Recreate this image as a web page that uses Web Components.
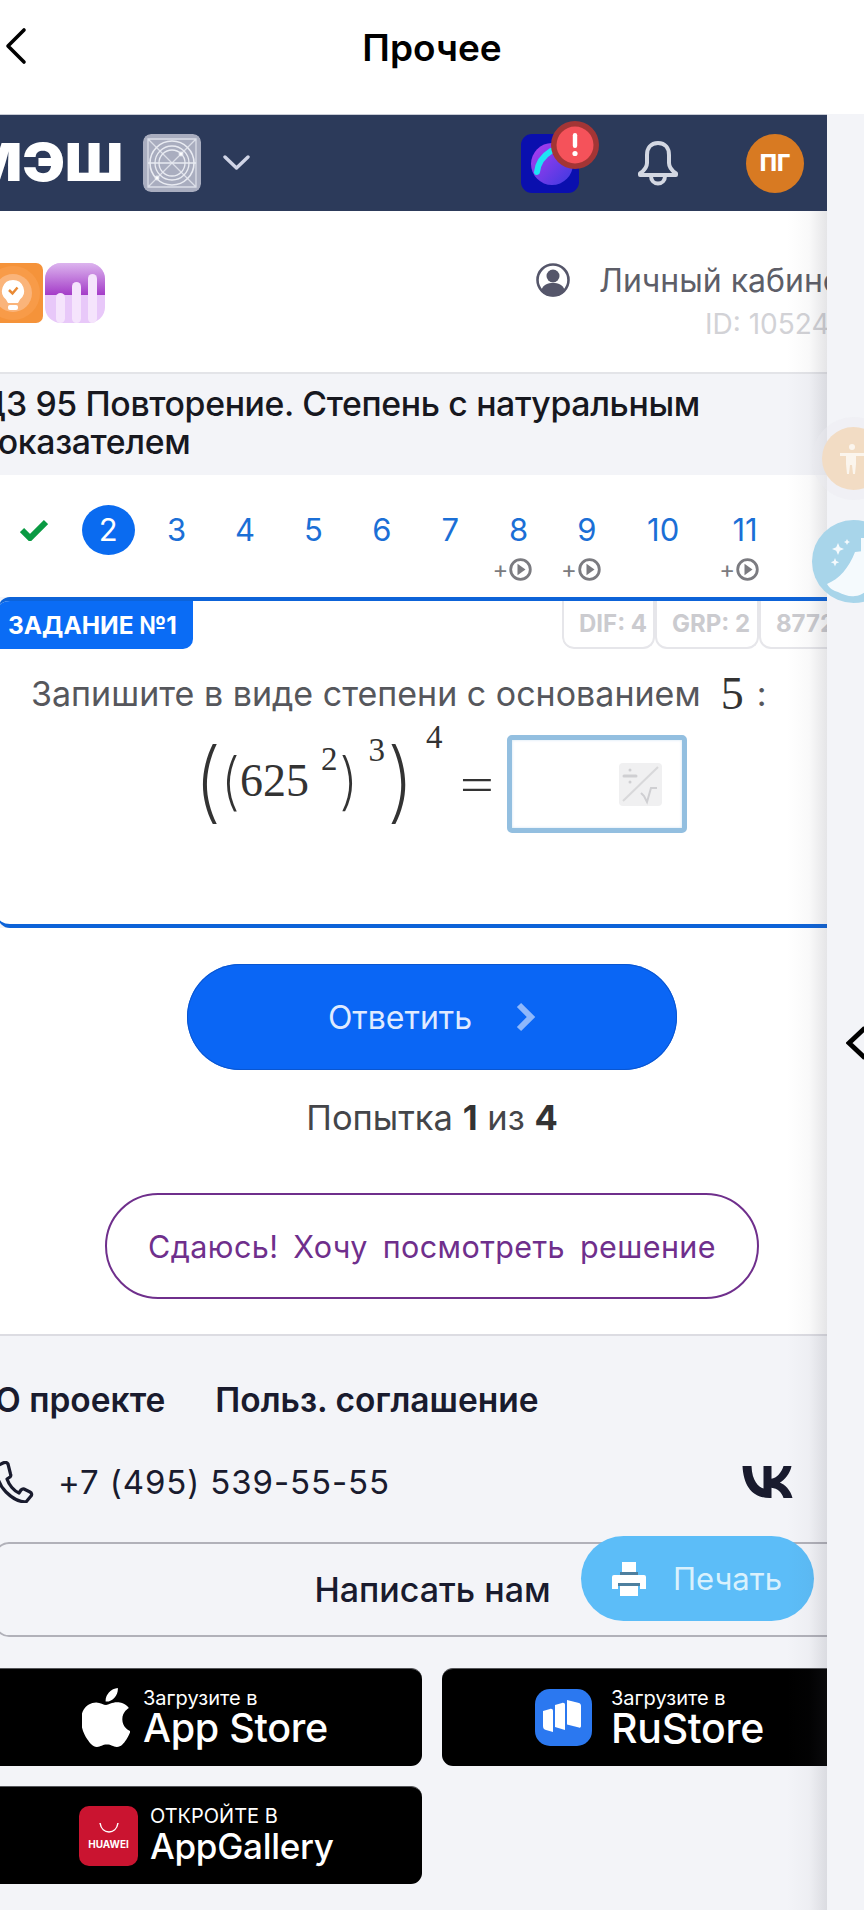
<!doctype html>
<html lang="ru">
<head>
<meta charset="utf-8">
<title>Прочее</title>
<style>
  html, body { margin: 0; background: #fff; }
  body { font-family: Inter, "Liberation Sans", sans-serif; }
</style>
</head>
<body>
<app-bar>Прочее</app-bar>
<app-frame>
  <mesh-header></mesh-header>
  <sub-header></sub-header>
  <lesson-title>ДЗ 95 Повторение. Степень с натуральным показателем</lesson-title>
  <task-nav></task-nav>
  <task-card></task-card>
  <task-actions></task-actions>
  <site-footer></site-footer>
</app-frame>

<script>
class Base extends HTMLElement {
  constructor() {
    super()
    this.attachShadow({ mode: 'open' })
  }

  connectedCallback() {
    this.shadowRoot.innerHTML = this.render()
  }
}

class AppBar extends Base {
  render() {
    return `
      <style>
        :host { display: flex; height: 114px; align-items: center; justify-content: center; position: relative; background: #fff; }
        .title { font-size: 37px; font-weight: 600; color: #000; margin-top: -19px; }
        svg { position: absolute; left: 4px; top: 27px; }
      </style>
      <svg width="24" height="38" viewBox="0 0 24 38" fill="none" stroke="#000" stroke-width="3.6" stroke-linecap="round" stroke-linejoin="round"><path d="M20 3 4 19l16 16"/></svg>
      <span class="title"><slot></slot></span>
    `
  }
}

class AppFrame extends Base {
  render() {
    return `
      <style>
        :host { display: flex; height: 1796px; background: #f3f4f8; position: relative; overflow: hidden; }
        .main { width: 827px; flex: none; position: relative; overflow: hidden; }
        .fade { position: absolute; right: 0; top: 97px; bottom: 0; width: 40px; pointer-events: none;
          background: linear-gradient(to right, rgba(70,70,85,0), rgba(70,70,85,.03) 55%, rgba(70,70,85,.14)); }
        .rail { flex: 1; display: flex; align-items: center; }
        .rail svg { margin-top: 62px; margin-left: 19px; }
        .bubble { position: absolute; border-radius: 50%; overflow: hidden; }
        .a11y { left: 822px; top: 313px; width: 63px; height: 63px; background: #f2dcc4; box-shadow: 0 0 0 10px rgba(235,235,240,.4); }
        .broom { left: 812px; top: 406px; width: 83px; height: 83px; background: #a8d5ea; }
      </style>
      <div class="main"><slot></slot><div class="fade"></div></div>
      <div class="rail">
        <svg width="18" height="36" viewBox="0 0 18 36" fill="none" stroke="#000" stroke-width="5" stroke-linejoin="miter"><path d="M19 3 3 18l16 15"/></svg>
      </div>
      <div class="bubble a11y">
        <svg width="63" height="63" viewBox="0 0 63 63" fill="#fff" opacity=".7"><circle cx="30" cy="20" r="3"/><path d="M18 26h24v3h-8v8l-1 10h-2l-1-9h-2l-1 9h-2l-1-10v-8h-6z"/></svg>
      </div>
      <div class="bubble broom">
        <svg width="83" height="83" viewBox="0 0 83 83" fill="#fff" opacity=".88">
          <path d="M43 32C37 48 27 59 15 64c3 5 7 7 11 8 6 3 12 5 17 4 4 0 7-2 10-4V31z"/>
          <path d="M49 18h5v14h-5z"/>
          <path d="M26 23l1.800 4.200 4.200 1.800-4.200 1.800-1.800 4.200-1.800-4.200-4.200-1.800 4.200-1.800zM23 38l1.200 3 3 1.200-3 1.200-1.200 3-1.200-3-3-1.200 3-1.200zM35 19l1 2 2 1-2 1-1 2-1-2-2-1 2-1z"/>
        </svg>
      </div>
    `
  }
}

class MeshHeader extends Base {
  render() {
    return `
      <style>
        :host { display: flex; height: 97px; align-items: center; background: #2c3a5a; padding-right: 23px; border-top: 1px solid #c9ccd6; box-sizing: border-box; }
        .logo { width: 123px; flex: none; display: flex; justify-content: flex-end; font-size: 52px; font-weight: 900; color: #fff; line-height: 1; white-space: nowrap; transform: scaleX(1.1); transform-origin: right center; }
        .tile { width: 58px; height: 58px; border-radius: 8px; margin-left: 20px; flex: none; }
        .chev { margin-left: 22px; flex: none; }
        .app { margin-left: auto; width: 58px; height: 59px; border-radius: 11px; background: #0a0fae; position: relative; flex: none; }
        .badge { position: absolute; left: 30px; top: -13px; width: 48px; height: 48px; }
        .bell { margin-left: 58px; flex: none; }
        .ava { margin-left: 67px; width: 58px; height: 59px; border-radius: 50%; background: #d87a22; color: #fff; display: flex; align-items: center; justify-content: center; font-size: 23px; font-weight: 800; flex: none; }
      </style>
      <span class="logo">МЭШ</span>
      <svg class="tile" viewBox="0 0 58 58" fill="none" stroke="#e9ebf2" stroke-width="1.300">
        <rect width="58" height="58" rx="8" fill="#a9adbf" stroke="none"/>
        <path d="M5 5l48 48M53 5 5 53M5 5v48h48V5z" opacity=".8"/>
        <circle cx="29" cy="29" r="22" stroke-width="1.600"/><circle cx="29" cy="29" r="17"/><circle cx="29" cy="29" r="13"/>
        <path d="M5 29h48"/><circle cx="14" cy="44" r="1.800" fill="#fff"/><circle cx="38" cy="20" r="1.800" fill="#fff"/>
      </svg>
      <svg class="chev" width="27" height="16" viewBox="0 0 27 16" fill="none" stroke="#d0d4e6" stroke-width="3.400" stroke-linecap="round" stroke-linejoin="round"><path d="M2 2l11.500 11L25 2"/></svg>
      <div class="app">
        <svg width="58" height="59" viewBox="0 0 58 59" fill="none">
          <defs><linearGradient id="g" x1="0" y1="0" x2="1" y2="1"><stop offset="0" stop-color="#b03cf0"/><stop offset="1" stop-color="#3a3ae0"/></linearGradient></defs>
          <circle cx="31" cy="30" r="21" fill="url(#g)"/>
          <path d="M16 38c1-9 6-16 14-21" stroke="#1ee3f5" stroke-width="6" stroke-linecap="round"/>
        </svg>
        <svg class="badge" viewBox="0 0 48 48"><circle cx="24" cy="24" r="24" fill="#a33535"/><circle cx="24" cy="24" r="18.500" fill="#f5525a"/><rect x="21.800" y="12" width="4.400" height="15" rx="2.200" fill="#fff"/><circle cx="24" cy="32.500" r="2.600" fill="#fff"/></svg>
      </div>
      <svg class="bell" width="42" height="46" viewBox="0 0 42 46" fill="none" stroke="#d3d7e2" stroke-width="4" stroke-linejoin="round" stroke-linecap="round">
        <path d="M21 3c-7.500 0-11 5.500-11 12v8c0 4-2 7-7 10.500v1.500h36v-1.500C34 30 32 27 32 23v-8c0-6.500-3.500-12-11-12z"/>
        <path d="M14 36c0 4.500 3 7.500 7 7.500s7-3 7-7.500"/>
      </svg>
      <div class="ava">ПГ</div>
    `
  }
}

class SubHeader extends Base {
  render() {
    return `
      <style>
        :host { display: flex; height: 163px; box-sizing: border-box; background: #fff; border-bottom: 2px solid #e3e4e8; padding-top: 52px; align-items: flex-start; overflow: hidden; }
        .icons { display: flex; gap: 2px; margin-left: -16px; flex: none; }
        .user { margin-left: auto; display: flex; flex-direction: column; width: 291px; flex: none; white-space: nowrap; }
        .row { display: flex; align-items: center; gap: 29px; font-size: 32px; color: #5d5e68; height: 34px; }
        .id { font-size: 28px; color: #d2d2d6; margin-top: 10px; margin-left: 169px; }
      </style>
      <div class="icons">
        <svg width="59" height="60" viewBox="0 0 59 60">
          <rect width="59" height="60" rx="7" fill="#f5933a"/><circle cx="29" cy="30" r="27" fill="#f89b48"/><circle cx="29" cy="30" r="19" fill="#fab47a"/>
          <path d="M29 17a11 11 0 0 0-7 19.500l2 3.500h10l2-3.500a11 11 0 0 0-7-19.500z" fill="#fff"/><rect x="24" y="42" width="10" height="5" rx="2" fill="#fff"/>
          <path d="M25 27l3.500 3.500 5-6" fill="none" stroke="#e98a35" stroke-width="2.500"/>
        </svg>
        <svg width="60" height="60" viewBox="0 0 60 60">
          <defs><linearGradient id="p" x1="0" y1="0" x2="0" y2="1"><stop offset="0" stop-color="#dcb4ee"/><stop offset="1" stop-color="#a43cc8"/></linearGradient></defs>
          <rect width="60" height="60" rx="16" fill="#e8c8f9"/>
          <path d="M0 32V16A16 16 0 0 1 16 0h28a16 16 0 0 1 16 16v16z" fill="url(#p)"/>
          <g fill="#f5e4fc"><rect x="11" y="30" width="9" height="30" rx="4.500"/><rect x="27" y="19" width="9" height="41" rx="4.500"/><rect x="43" y="11" width="9" height="49" rx="4.500"/></g>
        </svg>
      </div>
      <div class="user">
        <div class="row">
          <svg width="34" height="34" viewBox="0 0 34 34" style="flex:none">
            <circle cx="17" cy="17" r="15.500" fill="#fff" stroke="#55566a" stroke-width="2.600"/>
            <circle cx="17" cy="13" r="6.500" fill="#55566a"/><path d="M5 28c2-7 7-8 12-8s10 1 12 8a16 16 0 0 1-24 0z" fill="#55566a"/>
          </svg>
          <span>Личный кабинет</span>
        </div>
        <div class="id">ID: 1052488</div>
      </div>
    `
  }
}

class LessonTitle extends Base {
  render() {
    return `
      <style>
        :host { display: block; height: 101px; box-sizing: border-box; background: #f3f4f8; padding: 11px 100px 0 0; margin-left: -22px; font-size: 33.800px; line-height: 38px; font-weight: 500; color: #17181f; letter-spacing: -.35px; }
      </style>
      <slot></slot>
    `
  }
}

class TaskNav extends Base {
  render() {
    const cols = [[3], [4], [5], [6], [7], [8, 1], [9, 1]]
    const item = (n, video, width = 68.4) => `
      <div class="item" style="width:${width}px">
        <span class="num">${n}</span>
        ${video ? `<span class="extra"><i>+</i><svg width="23" height="23" viewBox="0 0 23 23"><circle cx="11.500" cy="11.500" r="9.800" fill="none" stroke="#7b7b80" stroke-width="2.800"/><path d="M8.500 5.800 16.500 11.500 8.500 17.200z" fill="#7b7b80"/></svg></span>` : ''}
      </div>`

    return `
      <style>
        :host { display: flex; height: 122px; box-sizing: border-box; background: #fff; padding-top: 30px; align-items: flex-start; }
        .item { display: flex; flex-direction: column; align-items: center; flex: none; font-size: 31px; color: #1b6fd6; }
        .num { height: 50px; line-height: 50px; }
        .check { width: 68px; margin-right: 6px; height: 50px; display: flex; align-items: center; justify-content: center; flex: none; }
        .now .num { width: 53px; border-radius: 50%; background: #0a6bf0; color: #fff; text-align: center; }
        .extra { display: flex; align-items: center; height: 23px; margin: 3px 0 0 -12px; }
        i { font-style: normal; font-size: 24px; color: #7b7b80; margin-right: 1px; line-height: 23px; }
      </style>
      <div class="check"><svg width="28" height="22" viewBox="0 0 28 22" fill="none" stroke="#0a9a43" stroke-width="6"><path d="M2 11l8 8L26 3"/></svg></div>
      <div class="item now" style="width:68.4px"><span class="num">2</span></div>
      ${cols.map(([n, v]) => item(n, v)).join('')}
      ${item(10, 0, 84)}
      ${item(11, 1, 80)}
    `
  }
}

class TaskCard extends Base {
  render() {
    return `
      <style>
        :host { display: block; height: 331px; box-sizing: border-box; background: #fff; border-top: 4px solid #0d63d8; border-bottom: 4px solid #0d63d8; border-radius: 12px 0 0 12px; position: relative; overflow: hidden; margin-left: -2px; padding-left: 2px; }
        .top { display: flex; height: 48px; justify-content: space-between; }
        .tag { width: 195px; margin-left: -2px; box-sizing: border-box; background: #0a6cf5; color: #fff; font-size: 24.500px; font-weight: 700; padding-left: 10px; line-height: 48px; border-radius: 0 0 10px 0; white-space: nowrap; }
        .meta { display: flex; width: 265px; flex: none; overflow: hidden; border-radius: 0 0 0 12px; }
        .meta span { box-sizing: border-box; border: 2px solid #e6e6ea; border-top: 0; border-radius: 0 0 12px 12px; color: #cbcbcf; font-size: 24px; font-weight: 700; line-height: 46px; flex: none; white-space: nowrap; overflow: hidden; padding-left: 15px; }
        .text { display: flex; align-items: center; font-size: 34px; color: #56575c; height: 48px; margin: 20px 0 0 31px; white-space: nowrap; }
        .five { font-family: "Liberation Serif", serif; font-size: 46px; color: #333; margin: 0 13px 0 20px; }
        .eq { display: flex; align-items: center; height: 100px; margin: 17px 0 0 190px; font-family: "Liberation Serif", serif; font-size: 46px; color: #333; line-height: 1; white-space: nowrap; }
        .big { display: inline-block; font-family: Inter, sans-serif; font-size: 88px; font-weight: 200; width: 22px; text-align: center; margin-top: -8px; }
        .mid { display: inline-block; font-family: Inter, sans-serif; font-size: 62px; font-weight: 200; width: 17px; text-align: center; margin-top: -6px; }
        sup { font-size: 33px; line-height: 1; }
        .box { width: 180px; height: 98px; box-sizing: border-box; border: 5px solid #93bfe0; border-radius: 5px; margin-left: 18px; display: flex; align-items: center; justify-content: flex-end; padding: 0 20px 0 0; box-shadow: inset 0 0 3px #cfe3f2; }
      </style>
      <div class="top">
        <div class="tag">ЗАДАНИЕ №1</div>
        <div class="meta">
          <span style="width:93px">DIF: 4</span>
          <span style="width:104px">GRP: 2</span>
          <span style="width:90px">8772</span>
        </div>
      </div>
      <div class="text">Запишите в виде степени с основанием<span class="five">5</span>:</div>
      <div class="eq">
        <span class="big" style="margin-left:3px">(</span>
        <span class="mid" style="margin-left:5px">(</span>
        <span style="margin-left:3px;margin-top:-6px">625</span>
        <sup style="margin:-50px 0 0 12px">2</sup>
        <span class="mid" style="margin-left:1px">)</span>
        <sup style="margin:-68px 0 0 13px">3</sup>
        <span class="big" style="margin-left:1px">)</span>
        <sup style="margin:-93px 0 0 18px">4</sup>
        <span style="margin-left:21px;margin-top:2px;transform:scaleX(1.300)">=</span>
        <div class="box">
          <svg width="43" height="43" viewBox="0 0 43 43" fill="none">
            <rect width="43" height="43" rx="4" fill="#f0f0f1"/>
            <path d="M4 38 39 4" stroke="#d8d8da" stroke-width="2"/>
            <path d="M5 13h12M11 7v0M11 19v0" stroke="#cfcfd2" stroke-width="3" stroke-linecap="round"/>
            <path d="M22 30l3 3 3 6 4-14h6" stroke="#cfcfd2" stroke-width="2"/>
          </svg>
        </div>
      </div>
    `
  }
}

class TaskActions extends Base {
  render() {
    return `
      <style>
        :host { display: flex; flex-direction: column; align-items: center; height: 408px; box-sizing: border-box; background: #fff; border-bottom: 2px solid #dcdce2; padding: 36px 0 0 37px; }
        .answer { width: 490px; height: 106px; flex: none; border-radius: 53px; background: #0a66f5; color: #dfeaff; font-size: 32px; display: flex; align-items: center; justify-content: center; gap: 44px; box-sizing: border-box; box-shadow: inset 0 0 0 1px #0a56d0; }
        .try { font-size: 34.500px; color: #444549; margin-top: 29px; line-height: 38px; }
        b { color: #333; }
        .give { width: 654px; height: 106px; flex: none; border-radius: 53px; border: 2px solid #6f2f8c; box-sizing: border-box; margin-top: 56px; display: flex; align-items: center; justify-content: center; color: #6f2f8c; font-size: 30.500px; word-spacing: 6px; letter-spacing: .4px; }
      </style>
      <div class="answer">
        <span>Ответить</span>
        <svg width="20" height="30" viewBox="0 0 20 30" fill="none" stroke="#8fb8fb" stroke-width="6"><path d="M3 3l12 12L3 27"/></svg>
      </div>
      <div class="try">Попытка <b>1</b> из <b>4</b></div>
      <div class="give">Сдаюсь! Хочу посмотреть решение</div>
    `
  }
}

class StoreBadge extends Base {
  render() {
    return `
      <style>
        :host { display: flex; height: 98px; background: #000; border-radius: 11px; color: #fff; align-items: center; justify-content: flex-start; box-sizing: border-box; overflow: hidden; border-top: 1px solid #55565a; }
        .txt { display: flex; flex-direction: column; white-space: nowrap; }
        .s { font-size: var(--small, 20px); line-height: 21px; }
        .l { font-size: var(--large, 39.500px); line-height: 39px; font-weight: 500; letter-spacing: -.3px; }
        ::slotted(svg) { flex: none; }
      </style>
      <slot></slot>
      <div class="txt" style="margin-left:${this.getAttribute('gap')}px">
        <span class="s">${this.getAttribute('small')}</span>
        <span class="l">${this.getAttribute('large')}</span>
      </div>
    `
  }
}

class SiteFooter extends Base {
  render() {
    return `
      <style>
        :host { display: block; height: 576px; box-sizing: border-box; background: #f3f4f8; padding-top: 46px; color: #191b2e; position: relative; overflow: hidden; }
        .links { display: flex; font-size: 33.500px; font-weight: 600; line-height: 36px; margin-left: -5px; gap: 50px; white-space: nowrap; }
        .phone { display: flex; align-items: center; height: 44px; margin-top: 42px; font-size: 33px; letter-spacing: .9px; padding-right: 34px; }
        .phone .ic { margin-left: -6px; margin-right: 24px; flex: none; }
        .vk { margin-left: auto; flex: none; }
        .write { height: 95px; margin: 38px -20px 0 -6px; box-sizing: border-box; border: 2px solid #b1b1b9; border-radius: 15px; display: flex; align-items: center; justify-content: center; font-size: 34px; font-weight: 500; padding-left: 24px; }
        .print { position: absolute; left: 581px; top: 200px; width: 233px; height: 85px; border-radius: 43px; background: #5cbdf8; color: #d9f1fd; font-size: 31px; display: flex; align-items: center; gap: 27px; box-sizing: border-box; padding-left: 31px; }
        .grid { display: grid; grid-template-columns: 442px 405px; column-gap: 20px; row-gap: 20px; margin: 31px 0 0 -20px; }
      </style>
      <div class="links"><span>О проекте</span><span>Польз. соглашение</span></div>
      <div class="phone">
        <svg class="ic" width="40" height="42" viewBox="0 0 40 42" fill="none" stroke="#191b2e" stroke-width="3.200" stroke-linejoin="round">
          <path d="M9 2 3 5C2 14 5 24 12 31s13 10 20 10l5-6c1-1 1-3-1-4l-6-3c-1-.5-2 0-3 1l-2 3c-5-2-10-8-12-14l3-2c1-1 1-2 .5-3L14 3C13 1.500 11 1 9 2z"/>
        </svg>
        <span>+7 (495) 539-55-55</span>
        <svg class="vk" width="51" height="32" viewBox="0 0 50 32" fill="#191b2e"><path d="M27 32C10 32 1 20 0 0h9c.5 15 7 21 12 22.500V0h8v12.800C34 12.300 39 6.500 41 0h8c-1.500 8-7 14-11.600 16.500C42 18.600 48 23.500 50 32h-9c-1.600-5.500-6-9.700-12-10.300V32z"/></svg>
      </div>
      <div class="write">Написать нам</div>
      <div class="print">
        <svg width="34" height="36" viewBox="0 0 34 36" style="flex:none">
          <path d="M10 1h14v11H10z" fill="#fff"/><path d="M8 11h18v3H8z" fill="#4e7f9e"/>
          <path d="M2 14h30a2 2 0 0 1 2 2v12h-6v-6H6v6H0V16a2 2 0 0 1 2-2z" fill="#fff"/>
          <path d="M6 22h22v3H6z" fill="#4e7f9e"/><path d="M8 25h18v10H8z" fill="#fff"/>
        </svg>
        <span>Печать</span>
      </div>
      <div class="grid">
        <store-badge small="Загрузите в" large="App Store" gap="13" style="padding-left:102px">
          <svg width="48" height="59" viewBox="2.600 0 19 24" fill="#fff" preserveAspectRatio="none"><path d="M12.152 6.896c-.948 0-2.415-1.078-3.960-1.040-2.040.027-3.910 1.183-4.961 3.014-2.117 3.675-.546 9.103 1.519 12.090 1.013 1.454 2.208 3.090 3.792 3.039 1.520-.065 2.090-.987 3.935-.987 1.831 0 2.350.987 3.960.948 1.637-.026 2.676-1.480 3.676-2.948 1.156-1.688 1.636-3.325 1.662-3.415-.039-.013-3.182-1.221-3.220-4.857-.026-3.040 2.480-4.494 2.597-4.559-1.429-2.090-3.623-2.324-4.390-2.376-2-.156-3.675 1.090-4.610 1.090zM15.530 3.830c.843-1.012 1.400-2.427 1.245-3.830-1.207.052-2.662.805-3.532 1.818-.780.896-1.454 2.338-1.273 3.714 1.338.104 2.715-.688 3.559-1.701"/></svg>
        </store-badge>
        <store-badge small="Загрузите в" large="RuStore" gap="19" style="padding-left:93px;--large:41px">
          <svg width="57" height="57" viewBox="0 0 57 57">
            <rect width="57" height="57" rx="15" fill="#2b78f0"/>
            <g fill="#fff"><path d="M8 22l7-2c2-.5 3 .5 3 2v21l-7-2c-2-.5-3-1.500-3-4z"/><path d="M20 16l7-2c2-.5 3 .5 3 2v25l-10-3z"/><path d="M32 11l12 3c1.500.5 2 1.500 2 3v20c0 1.500-1 2-2 1.500l-12-3z"/></g>
          </svg>
        </store-badge>
        <store-badge small="ОТКРОЙТЕ В" large="AppGallery" gap="12" style="padding-left:99px;--large:35px">
          <div style="width:59px;height:60px;flex:none;border-radius:10px;background:#ca1430;display:flex;flex-direction:column;align-items:center;justify-content:center;color:#fff;font-size:10px;font-weight:700;gap:5px;line-height:1">
            <svg width="20" height="12" viewBox="0 0 20 12" fill="none" stroke="#fff" stroke-width="1.500"><path d="M1 1c1 6 5 9 9 9s8-3 9-9"/></svg>
            <span>HUAWEI</span>
          </div>
        </store-badge>
      </div>
    `
  }
}

customElements.define('app-bar', AppBar)
customElements.define('app-frame', AppFrame)
customElements.define('mesh-header', MeshHeader)
customElements.define('sub-header', SubHeader)
customElements.define('lesson-title', LessonTitle)
customElements.define('task-nav', TaskNav)
customElements.define('task-card', TaskCard)
customElements.define('task-actions', TaskActions)
customElements.define('store-badge', StoreBadge)
customElements.define('site-footer', SiteFooter)
</script>
</body>
</html>
